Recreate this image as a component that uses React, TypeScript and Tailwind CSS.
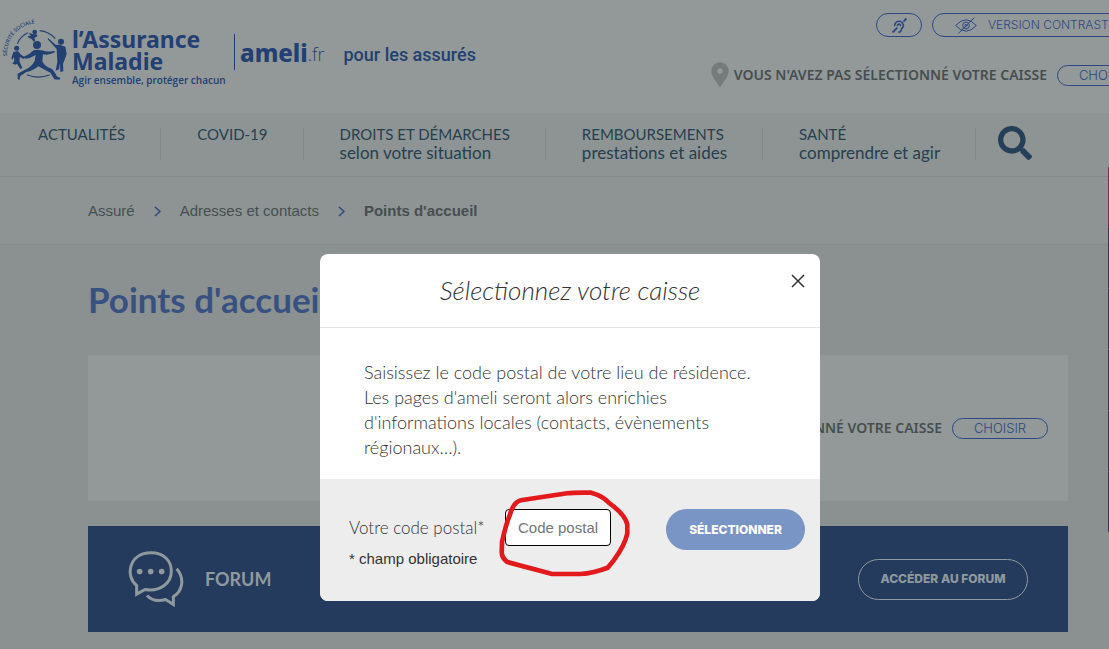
import { FaDeaf, FaSearch } from "react-icons/fa";

const navItems = [
  { title: "ACTUALITÉS", subtitle: "" },
  { title: "COVID-19", subtitle: "" },
  { title: "DROITS ET DÉMARCHES", subtitle: "selon votre situation" },
  { title: "REMBOURSEMENTS", subtitle: "prestations et aides" },
  { title: "SANTÉ", subtitle: "comprendre et agir" },
];

const Logo: React.FC = () => (
  <svg viewBox="0 20 210 195" className="w-[70px] h-[65px] shrink-0" fill="#234072" aria-hidden="true">
    <path id="arc" d="M18 134 A93 93 0 0 1 120 36" fill="none" />
    <text className="font-['Open_Sans'] font-semibold text-[16px]">
      <textPath href="#arc">SÉCURITÉ SOCIALE</textPath>
    </text>
    <g fill="none" stroke="#234072" strokeWidth="3.5">
      <path d="M49 97 Q58 75 80 64" />
      <path d="M116 58 Q143 60 163 82" />
      <path d="M78 190 Q110 204 146 191" />
    </g>
    {/* child at the top */}
    <circle cx="101" cy="62" r="7" />
    <path d="M82 64 L95 68 L107 69 L109 75 L100 80 L103 88 L98 91 L92 83 L83 79 L80 74 L90 73 Z" />
    {/* child on the left */}
    <circle cx="47" cy="111" r="7.5" />
    <path d="M37 122 L51 119 L60 130 L72 138 L68 143 L56 137 L56 152 L64 169 L58 173 L48 157 L44 160 L34 157 L40 149 L39 136 L34 146 L31 141 Z" />
    {/* runner in the middle */}
    <circle cx="108" cy="101" r="12" />
    <path d="M68 136 Q86 130 98 117 Q108 113 122 117 Q142 124 159 118 L162 123 Q143 133 126 129 L124 150 Q129 164 148 171 Q161 178 167 195 L178 200 L176 205 L160 204 L148 184 L112 165 Q91 181 76 182 L58 194 L55 206 L50 203 L50 187 L72 175 Q91 168 101 149 L104 131 Q88 142 72 142 Z" />
    {/* adult on the right */}
    <circle cx="180" cy="91" r="9" />
    <path d="M142 81 L164 100 L178 101 L193 106 L197 128 L192 142 L186 158 L187 180 L178 182 L177 155 L174 174 L164 178 L169 151 L167 113 L140 84 Z" />
  </svg>
);

const EyeOff: React.FC = () => (
  <svg viewBox="0 0 66 50" className="w-[22px] h-[17px]" fill="none" stroke="#2d4784" strokeWidth="3" aria-hidden="true">
    <path d="M2 25 Q33 -9 64 25 Q33 59 2 25 Z" />
    <circle cx="33" cy="25" r="10" />
    <circle cx="33" cy="25" r="3" />
    <path d="M58 1 L10 49" />
  </svg>
);

const Pin: React.FC = () => (
  <svg viewBox="0 0 54 78" className="w-[18px] h-[26px]" aria-hidden="true">
    <path
      fill="#757b7b"
      fillRule="evenodd"
      d="M27 1 A26 26 0 0 0 1 27 C1 45 18 60 27 77 C36 60 53 45 53 27 A26 26 0 0 0 27 1 Z M27 19 a8 8 0 1 1 0 16 a8 8 0 1 1 0 -16 Z"
    />
  </svg>
);

const ForumIcon: React.FC = () => (
  <svg viewBox="0 0 168 170" className="w-14 h-[57px]" fill="none" stroke="#8f9a9f" strokeWidth="9" aria-hidden="true">
    <path d="M26 129 L26 103 C-9 76 2 5 69 5 C109 5 130 30 130 60 C130 96 96 123 51 115 Z" />
    <path d="M146 53 C171 82 164 119 136 137 L136 160 L113 145 C91 151 70 147 57 133" />
    <g fill="#8f9a9f" stroke="none">
      <circle cx="35" cy="61" r="8.5" />
      <circle cx="68" cy="61" r="8.5" />
      <circle cx="101" cy="61" r="8.5" />
    </g>
  </svg>
);

const ChooseButton: React.FC = () => (
  <button className="w-24 h-[21px] rounded-full border border-[#2d4784] text-[13px] leading-none text-[#2d4784] font-['Inter'] font-light cursor-pointer">
    CHOISIR
  </button>
);

const CaisseStatus: React.FC = () => (
  <div className="flex items-center gap-[10px]">
    <div className="flex items-center gap-[5px]">
      <Pin />
      <span className="font-['Noto_Sans'] font-semibold text-sm text-[#474e50]">
        VOUS N'AVEZ PAS SÉLECTIONNÉ VOTRE CAISSE
      </span>
    </div>
    <ChooseButton />
  </div>
);

const Chevron: React.FC = () => (
  <svg viewBox="0 0 7 11" className="w-[7px] h-[11px]" fill="none" stroke="#2d4784" strokeWidth="1.5" aria-hidden="true">
    <path d="M1 1 L6 5.5 L1 10" />
  </svg>
);

const Header: React.FC = () => (
  <header className="h-[113px] bg-[#929998] flex items-start justify-between pr-[3px]">
    <a href="#" className="flex items-start pl-[1px] pt-[18px] text-[#234072]">
      <Logo />
      <div className="pt-[10px] pl-[1px] w-[163px] whitespace-nowrap">
        <div className="font-['Noto_Sans'] text-[23px] leading-[22px] font-bold">
          l’Assurance
          <br />
          Maladie
        </div>
        <div className="font-['Open_Sans'] text-[10px] leading-4 font-semibold">Agir ensemble, protéger chacun</div>
      </div>
      <div className="mt-4 h-9 border-l border-[#234072] pl-[5px] flex items-center">
        <span className="font-['Noto_Sans'] font-extrabold text-2xl pt-[2px]">ameli</span>
        <span className="font-['Open_Sans'] font-light text-lg pt-1">.fr</span>
        <span className="font-['Roboto'] font-medium text-lg pl-[19px] pt-[6px]">pour les assurés</span>
      </div>
    </a>
    <div className="flex flex-col items-end pt-[13px]">
      <div className="flex gap-[10px]">
        <button aria-label="Accessibilité sourds et malentendants" className="w-[46px] h-6 rounded-full border border-[#2d4784] flex items-center justify-center text-[#2d4784] cursor-pointer">
          <FaDeaf size={15} />
        </button>
        <button className="w-[221px] h-6 rounded-full border border-[#2d4784] flex items-center gap-[11px] pl-[22px] text-xs text-[#2d4784] font-['Inter'] font-light cursor-pointer">
          <EyeOff />
          VERSION CONTRASTÉE
        </button>
      </div>
      <div className="mt-[25px]">
        <CaisseStatus />
      </div>
    </div>
  </header>
);

const Navbar: React.FC = () => (
  <nav className="h-16 bg-[#8d9493] border-b border-[#828a89] flex pl-[2px] pt-[15px] font-['Lato'] text-[#263f50]">
    {navItems.map((item) => (
      <a key={item.title} href="#" className="h-8 pl-9 pr-[35px] border-r border-[#808988]">
        <span className="block -mt-[3px] text-[15px] leading-[19px]">{item.title}</span>
        <span className="block text-[17px] leading-[18px]">{item.subtitle}</span>
      </a>
    ))}
    <button aria-label="Rechercher" className="ml-[22px] -mt-[3px] h-9 text-[#263f58] cursor-pointer">
      <FaSearch size={34} />
    </button>
  </nav>
);

const Modal: React.FC = () => (
  <div className="absolute inset-0 z-50 flex justify-center items-start pr-4 pt-[254px]">
    <div role="dialog" aria-labelledby="modal-title" className="w-full max-w-[500px] rounded-lg bg-white text-[#333]">
      <div className="relative h-[74px] border-b border-[#e3e3e3] flex items-center justify-center">
        <h2 id="modal-title" className="font-['Lato'] font-light italic text-[26px]">
          Sélectionnez votre caisse
        </h2>
        <button aria-label="Fermer" className="absolute right-[15px] top-5 cursor-pointer">
          <svg viewBox="0 0 14 14" className="w-[14px] h-[14px]" stroke="#333" strokeWidth="1.5">
            <path d="M1 1 L13 13 M13 1 L1 13" />
          </svg>
        </button>
      </div>

      <p className="px-11 pt-8 pb-[19px] font-['Lato'] font-light text-lg leading-[25px]">
        Saisissez le code postal de votre lieu de résidence. Les pages d'ameli seront alors enrichies
        <br />
        d'informations locales (contacts, évènements régionaux…).
      </p>

      <div className="h-[122px] rounded-b-lg bg-[#ededed] pl-[29px] pr-[15px] pt-[30px]">
        <div className="flex items-start">
          <label htmlFor="code-postal" className="w-[156px] font-['Lato'] font-light text-[17px] leading-[37px]">
            Votre code postal*
          </label>
          <div className="relative">
            <input
              id="code-postal"
              type="text"
              placeholder="Code postal"
              className="block w-[106px] h-[37px] rounded border border-black bg-white px-3 font-['Liberation_Sans'] text-[15px] placeholder:text-[#757575]"
            />
            {/* Hand-drawn highlight */}
            <svg
              viewBox="530 50 410 280"
              className="absolute -left-2 -top-[22px] w-[137px] h-[93px] max-w-none pointer-events-none"
              fill="none"
              stroke="#e3191c"
              strokeWidth="14"
              strokeLinejoin="round"
            >
              <path d="M580 105 Q588 92 605 89 L740 69 Q760 66 812 67 Q850 78 865 97 Q915 133 921 163 V190 Q914 225 880 271 L862 293 Q820 309 780 312 H695 L560 276 Q542 262 543 245 L544 215 Q555 165 566 138 Q573 115 580 105 Z" />
            </svg>
          </div>
          <button className="ml-auto w-[139px] h-[41px] rounded-full bg-[#7995c6] text-white font-['Inter'] font-extrabold text-xs cursor-pointer">
            SÉLECTIONNER
          </button>
        </div>
        <div className="font-['Liberation_Sans'] text-[15px] leading-[18px]">* champ obligatoire</div>
      </div>
    </div>
  </div>
);

const App: React.FC = () => {
  return (
    <div className="w-full overflow-hidden">
      <div className="relative min-w-[1156px] min-h-screen bg-[#8b9190]">
        <Header />
        <Navbar />

        {/* Breadcrumb */}
        <div className="h-[68px] bg-[#8d9493] border-b border-[#858d8c]">
          <ol className="max-w-[980px] mx-auto h-full flex items-center pt-[2px] font-['Liberation_Sans'] text-[15px] text-[#474e50]">
            <li><a href="#">Assuré</a></li>
            <li className="px-[19px]"><Chevron /></li>
            <li><a href="#">Adresses et contacts</a></li>
            <li className="px-[19px]"><Chevron /></li>
            <li className="font-bold">Points d'accueil</li>
          </ol>
        </div>

        <main className="max-w-[980px] mx-auto pt-[34px] pb-4">
          <h1 className="font-['Lato'] font-bold text-[35px] leading-10 text-[#385180]">Points d'accueil</h1>

          <section className="mt-9 h-[146px] bg-[#929998] flex items-center justify-end pr-5">
            <CaisseStatus />
          </section>

          <section className="mt-[25px] h-[106px] bg-[#253b5d] flex items-center px-10">
            <ForumIcon />
            <h2 className="pl-[21px] font-['Lato'] font-bold text-lg text-[#8f9a9f]">FORUM</h2>
            <a
              href="#"
              className="ml-auto w-[170px] h-[41px] rounded-full border border-[#8f9a9f] flex items-center justify-center font-['Inter'] font-extrabold text-xs text-[#8f9a9f]"
            >
              ACCÉDER AU FORUM
            </a>
          </section>
        </main>

        {/* Side tabs */}
        <div className="absolute right-0 top-[167px] w-12">
          <div className="h-[61px] bg-[#7a2c59]" />
          <div className="h-[304px] bg-[#213f66] divide-y divide-[#56708a]">
            <div className="h-[61px]" />
            <div className="h-[61px]" />
            <div className="h-[61px]" />
            <div className="h-[61px]" />
            <div className="h-[60px]" />
          </div>
        </div>

        <Modal />
      </div>
    </div>
  );
};

export default App;
